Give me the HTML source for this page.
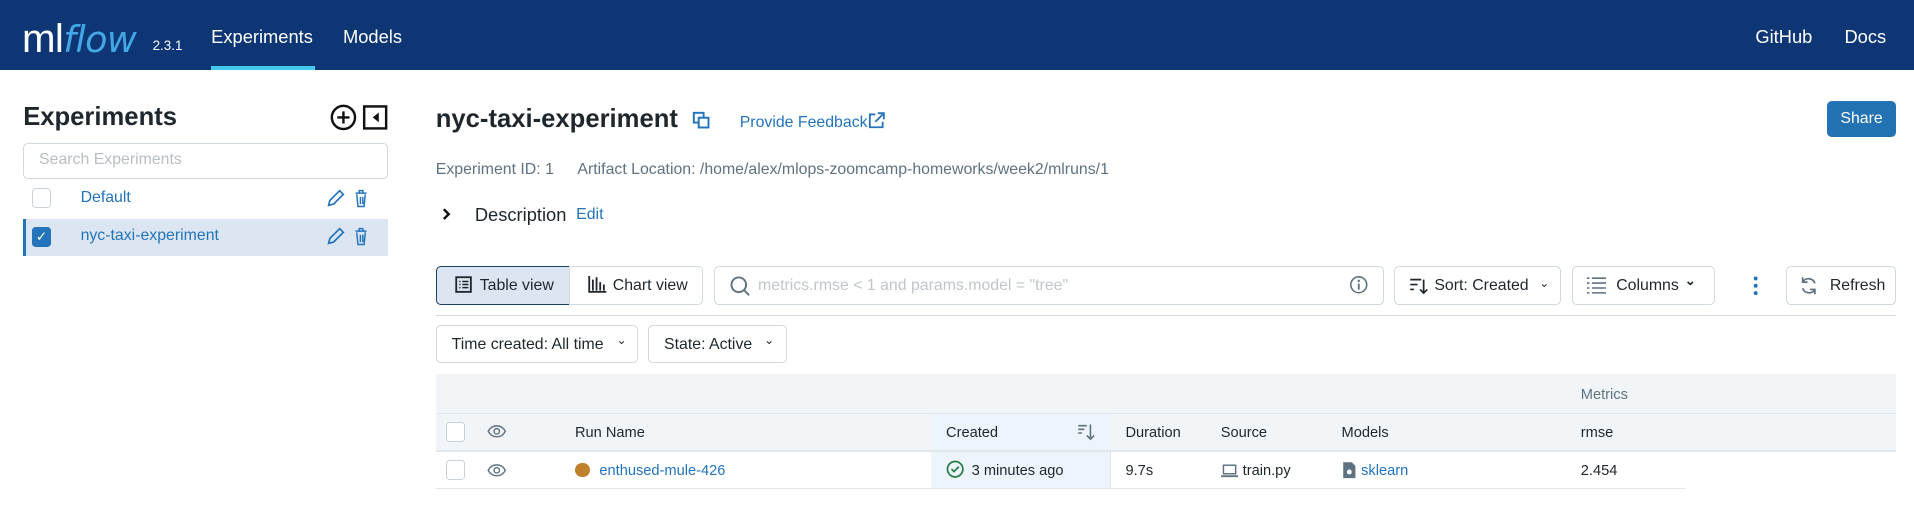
<!DOCTYPE html>
<html><head><meta charset="utf-8"><style>
*{box-sizing:border-box;margin:0;padding:0}
html,body{width:1914px;height:528px;overflow:hidden;background:#fff}
#w{width:1568px;height:433px;zoom:1.2207;position:relative;font-family:"Liberation Sans",sans-serif;color:#1f272d;font-size:13px}
.a{position:absolute;white-space:nowrap}
.hdr{left:0;top:0;width:1568px;height:57px;background:#0e3574}
.nav{color:#fff;font-size:15px;top:21px}
.blue{color:#2374bb}
.box{border:1px solid #d1d9e1;border-radius:4px;background:#fff}
.cb{width:16px;height:16px;border:1px solid #c8d1da;border-radius:3px;background:#fff}
.gray{color:#5f7281}
svg{display:block}
</style></head><body><div id="w">
<div class="a hdr"></div>
<div class="a" style="left:18px;top:13px;font-size:33px;color:#fff;letter-spacing:-0.5px">ml<span style="color:#43a7e6;font-style:italic;font-family:'DejaVu Sans',sans-serif;font-size:30px">flow</span></div>
<div class="a" style="left:125px;top:31px;font-size:11px;color:#fff">2.3.1</div>
<div class="a nav" style="left:173px">Experiments</div>
<div class="a" style="left:173px;top:54px;width:85px;height:3px;background:#43c9ed"></div>
<div class="a nav" style="left:281px">Models</div>
<div class="a nav" style="left:1438px">GitHub</div>
<div class="a nav" style="left:1511px">Docs</div>

<div class="a" style="left:19px;top:84px;font-size:21px;font-weight:bold">Experiments</div>
<svg class="a" style="left:270px;top:85px" width="48" height="22"><circle cx="11" cy="11" r="9.5" fill="none" stroke="#111" stroke-width="2"/><path d="M11 6v10M6 11h10" stroke="#111" stroke-width="2"/><rect x="28" y="2" width="18" height="18" fill="none" stroke="#111" stroke-width="2"/><path d="M40 7v8l-5-4z" fill="#111"/></svg>
<div class="a box" style="left:19px;top:117px;width:299px;height:30px"></div>
<div class="a" style="left:32px;top:124px;color:#b8bec4">Search Experiments</div>
<div class="a cb" style="left:26px;top:154px"></div>
<div class="a blue" style="left:66px;top:155px">Default</div>
<div class="a" style="left:19px;top:179px;width:299px;height:31px;background:#dbe6f2;border-left:3px solid #2374bb"></div>
<div class="a" style="left:26px;top:186px;width:16px;height:16px;border-radius:3px;background:#2374bb;color:#fff;font-size:11px;text-align:center;line-height:16px">✓</div>
<div class="a blue" style="left:66px;top:186px">nyc-taxi-experiment</div>
<svg class="a" style="left:266px;top:153px" width="40" height="18"><path d="M3 15l1-4 8-8 3 3-8 8z" fill="none" stroke="#2374bb" stroke-width="1.4"/><path d="M25 5h9M28 5V3h3v2M26 6l1 10h5l1-10M29 8v6M31 8v6" fill="none" stroke="#2374bb" stroke-width="1.2"/></svg>
<svg class="a" style="left:266px;top:184px" width="40" height="18"><path d="M3 15l1-4 8-8 3 3-8 8z" fill="none" stroke="#2374bb" stroke-width="1.4"/><path d="M25 5h9M28 5V3h3v2M26 6l1 10h5l1-10M29 8v6M31 8v6" fill="none" stroke="#2374bb" stroke-width="1.2"/></svg>

<div class="a" style="left:357px;top:86px;font-size:21px;font-weight:bold">nyc-taxi-experiment</div>
<svg class="a" style="left:567px;top:91px" width="16" height="16"><rect x="1.5" y="1.5" width="8" height="8" fill="none" stroke="#2374bb" stroke-width="1.6"/><rect x="5.5" y="5.5" width="8" height="8" fill="#fff" stroke="#2374bb" stroke-width="1.6"/></svg>
<div class="a blue" style="left:606px;top:93px">Provide Feedback</div>
<svg class="a" style="left:711px;top:92px" width="14" height="14"><path d="M6 2H1.5v10.5H12V8M8 1h5v5M13 1L6 8" fill="none" stroke="#2374bb" stroke-width="1.5"/></svg>
<div class="a" style="left:1497px;top:83px;width:56px;height:29px;background:#2272b4;border-radius:4px;color:#fff;text-align:center;line-height:29px">Share</div>
<div class="a gray" style="left:357px;top:132px">Experiment ID: 1</div>
<div class="a gray" style="left:473px;top:132px">Artifact Location: /home/alex/mlops-zoomcamp-homeworks/week2/mlruns/1</div>
<svg class="a" style="left:362px;top:170px" width="8" height="10"><path d="M1.5 1l4 4-4 4" fill="none" stroke="#111" stroke-width="2"/></svg>
<div class="a" style="left:389px;top:167px;font-size:15px">Description</div>
<div class="a blue" style="left:472px;top:169px">Edit</div>

<div class="a" style="left:357px;top:218px;width:110px;height:32px;background:#dbe6f2;border:1px solid #1d3f63;border-radius:4px 0 0 4px"></div>
<svg class="a" style="left:373px;top:226px" width="14" height="14"><rect x="1" y="1" width="12" height="12" fill="none" stroke="#1f272d" stroke-width="1.5"/><path d="M3.5 4.5h1M6 4.5h5M3.5 7h1M6 7h5M3.5 9.5h1M6 9.5h5" stroke="#1f272d" stroke-width="1.2"/></svg>
<div class="a" style="left:393px;top:227px">Table view</div>
<div class="a box" style="left:466px;top:218px;width:110px;height:32px;border-radius:0 4px 4px 0"></div>
<svg class="a" style="left:482px;top:226px" width="16" height="14"><path d="M1 0v13h14M4 3v9M7 1v11M10 5v7M13 7v5" stroke="#1f272d" stroke-width="1.5" fill="none"/></svg>
<div class="a" style="left:502px;top:227px">Chart view</div>
<div class="a box" style="left:585px;top:218px;width:549px;height:32px"></div>
<svg class="a" style="left:597px;top:225px" width="18" height="18"><circle cx="8" cy="8" r="6" fill="none" stroke="#5f7281" stroke-width="1.6"/><path d="M12.5 12.5l4 4" stroke="#5f7281" stroke-width="1.6"/></svg>
<div class="a" style="left:621px;top:227px;color:#c0c6cc">metrics.rmse &lt; 1 and params.model = "tree"</div>
<svg class="a" style="left:1105px;top:225px" width="16" height="16"><circle cx="8" cy="8" r="6.5" fill="none" stroke="#5f7281" stroke-width="1.3"/><path d="M8 7v5" stroke="#5f7281" stroke-width="1.5"/><circle cx="8" cy="4.8" r="1" fill="#5f7281"/></svg>
<div class="a box" style="left:1142px;top:218px;width:137px;height:32px"></div>
<svg class="a" style="left:1154px;top:226px" width="16" height="16"><path d="M1 3h9M1 7h6M1 11h3M12 3v11M9 11l3 3 3-3" stroke="#1f272d" stroke-width="1.4" fill="none"/></svg>
<div class="a" style="left:1175px;top:227px">Sort: Created</div>
<div class="a" style="left:1261px;top:226px;font-size:10px">&#8964;</div>
<div class="a box" style="left:1288px;top:218px;width:117px;height:32px"></div>
<svg class="a" style="left:1300px;top:227px" width="16" height="14"><path d="M0 1h2M4 1h12M0 5h2M4 5h12M0 9h2M4 9h12M0 13h2M4 13h12" stroke="#5f7281" stroke-width="1.3"/></svg>
<div class="a" style="left:1324px;top:227px">Columns</div>
<div class="a" style="left:1380px;top:224px;font-size:11px;font-weight:bold">&#8964;</div>
<svg class="a" style="left:1435px;top:226px" width="6" height="16"><circle cx="3" cy="2" r="1.6" fill="#2374bb"/><circle cx="3" cy="8" r="1.6" fill="#2374bb"/><circle cx="3" cy="14" r="1.6" fill="#2374bb"/></svg>
<div class="a box" style="left:1463px;top:218px;width:90px;height:32px"></div>
<svg class="a" style="left:1474px;top:226px" width="16" height="16"><path d="M13 6A5.5 5.5 0 0 0 3 5M3 10a5.5 5.5 0 0 0 10 1M3 1v4h4M13 15v-4H9" fill="none" stroke="#5f7281" stroke-width="1.4"/></svg>
<div class="a" style="left:1499px;top:227px">Refresh</div>
<div class="a" style="left:357px;top:258px;width:1196px;height:1px;background:#d1d9e1"></div>

<div class="a box" style="left:357px;top:266px;width:166px;height:31px"></div>
<div class="a" style="left:370px;top:275px">Time created: All time</div>
<div class="a" style="left:505px;top:273px;font-size:10px">&#8964;</div>
<div class="a box" style="left:531px;top:266px;width:114px;height:31px"></div>
<div class="a" style="left:544px;top:275px">State: Active</div>
<div class="a" style="left:626px;top:273px;font-size:10px">&#8964;</div>

<div class="a" style="left:357px;top:306px;width:1196px;height:64px;background:#f2f5f7"></div>
<div class="a" style="left:357px;top:338px;width:1196px;height:1px;background:#e2e7ec"></div>
<div class="a" style="left:763px;top:339px;width:146px;height:61px;background:#eef4fb"></div>
<div class="a" style="left:357px;top:369px;width:1196px;height:1px;background:#e2e7ec"></div>
<div class="a" style="left:357px;top:400px;width:1024px;height:1px;background:#e2e7ec"></div>
<div class="a" style="left:909px;top:370px;width:1px;height:30px;background:#e2e7ec"></div>
<div class="a gray" style="left:1295px;top:317px;font-size:12px">Metrics</div>
<div class="a cb" style="left:365px;top:346px"></div>
<div class="a cb" style="left:365px;top:377px"></div>
<svg class="a" style="left:399px;top:347px" width="16" height="12"><path d="M1 6c3-6 11-6 14 0-3 6-11 6-14 0z" fill="none" stroke="#5f7281" stroke-width="1.2"/><circle cx="8" cy="6" r="2.2" fill="none" stroke="#5f7281" stroke-width="1.2"/></svg>
<svg class="a" style="left:399px;top:379px" width="16" height="12"><path d="M1 6c3-6 11-6 14 0-3 6-11 6-14 0z" fill="none" stroke="#5f7281" stroke-width="1.2"/><circle cx="8" cy="6" r="2.2" fill="none" stroke="#5f7281" stroke-width="1.2"/></svg>
<div class="a" style="left:471px;top:348px;font-size:12px">Run Name</div>
<div class="a" style="left:775px;top:348px;font-size:12px">Created</div>
<svg class="a" style="left:882px;top:346px" width="16" height="16"><path d="M1 3h7M1 6h5M1 9h3M11 2v12M8 11l3 3 3-3" stroke="#5f7281" stroke-width="1.3" fill="none"/></svg>
<div class="a" style="left:922px;top:348px;font-size:12px">Duration</div>
<div class="a" style="left:1000px;top:348px;font-size:12px">Source</div>
<div class="a" style="left:1099px;top:348px;font-size:12px">Models</div>
<div class="a" style="left:1295px;top:348px;font-size:12px">rmse</div>
<div class="a" style="left:471px;top:379px;width:12px;height:12px;border-radius:50%;background:#c0812d"></div>
<div class="a blue" style="left:491px;top:379px;font-size:12px">enthused-mule-426</div>
<svg class="a" style="left:775px;top:377px" width="15" height="15"><circle cx="7.5" cy="7.5" r="6.3" fill="none" stroke="#277c43" stroke-width="1.4"/><path d="M4.5 7.5l2 2 4-4" fill="none" stroke="#277c43" stroke-width="1.4"/></svg>
<div class="a" style="left:796px;top:379px;font-size:12px">3 minutes ago</div>
<div class="a" style="left:922px;top:379px;font-size:12px">9.7s</div>
<svg class="a" style="left:1000px;top:380px" width="14" height="12"><rect x="2" y="1" width="10" height="7" fill="none" stroke="#5f7281" stroke-width="1.2"/><path d="M0 10h14" stroke="#5f7281" stroke-width="1.5"/></svg>
<div class="a" style="left:1018px;top:379px;font-size:12px">train.py</div>
<svg class="a" style="left:1099px;top:378px" width="12" height="15"><path d="M1 1h7l3 3v10H1z" fill="#5f7281"/><circle cx="6" cy="9" r="2" fill="#fff"/></svg>
<div class="a blue" style="left:1115px;top:379px;font-size:12px">sklearn</div>
<div class="a" style="left:1295px;top:379px;font-size:12px">2.454</div>
</div></body></html>
